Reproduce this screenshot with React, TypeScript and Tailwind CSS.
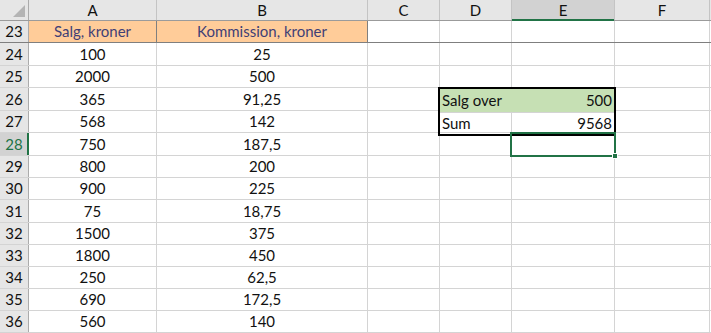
import React from 'react';

const cols = ['A', 'B', 'C', 'D', 'E', 'F'];

// widths include the 1px right gridline
const colClass: Record<string, string> = {
  A: 'w-[128px]',
  B: 'w-[211px]',
  C: 'w-[72px]',
  D: 'w-[72px]',
  E: 'w-[103px]',
  F: 'w-[95px]',
};

const rows: { n: number; h: string; a?: string; b?: string }[] = [
  { n: 23, h: 'h-[22px]', a: 'Salg, kroner', b: 'Kommission, kroner' },
  { n: 24, h: 'h-[23px]', a: '100', b: '25' },
  { n: 25, h: 'h-[22px]', a: '2000', b: '500' },
  { n: 26, h: 'h-[23px]', a: '365', b: '91,25' },
  { n: 27, h: 'h-[22px]', a: '568', b: '142' },
  { n: 28, h: 'h-[23px]', a: '750', b: '187,5' },
  { n: 29, h: 'h-[22px]', a: '800', b: '200' },
  { n: 30, h: 'h-[22px]', a: '900', b: '225' },
  { n: 31, h: 'h-[23px]', a: '75', b: '18,75' },
  { n: 32, h: 'h-[22px]', a: '1500', b: '375' },
  { n: 33, h: 'h-[22px]', a: '1800', b: '450' },
  { n: 34, h: 'h-[22px]', a: '250', b: '62,5' },
  { n: 35, h: 'h-[22px]', a: '690', b: '172,5' },
  { n: 36, h: 'h-[22px]', a: '560', b: '140' },
];

export default function App() {
  return (
    <div
      className="relative h-[333px] w-[711px] overflow-hidden bg-white text-[15px] text-[#111]"
      style={{ fontFamily: 'Lato, "Open Sans", sans-serif' }}
    >
      {/* ── Column headers ── */}
      <div className="flex h-[21px] border-b border-[#9b9b9b] bg-[#e6e6e6]">
        <div className="relative w-[29px] shrink-0 border-r border-[#ababab]">
          <svg className="absolute right-[3px] bottom-[3px]" width="12" height="12" viewBox="0 0 12 12">
            <polygon points="12,0 12,12 0,12" fill="#b4b4b4" />
          </svg>
        </div>
        {cols.map((c) => (
          <div
            key={c}
            className={`${colClass[c]} flex shrink-0 items-center justify-center border-r border-[#c4c4c4] leading-none ${
              c === 'E' ? 'relative bg-[#d2d2d2]' : ''
            }`}
          >
            {c}
            {c === 'E' && (
              <div className="absolute right-0 -bottom-px left-0 h-[2px] bg-[#217346]" />
            )}
          </div>
        ))}
        <div className="flex-1" />
      </div>

      {/* ── Rows ── */}
      {rows.map((r) => {
        const sel = r.n === 28;
        const head = r.n === 23;
        return (
          <div key={r.n} className={`flex ${r.h} border-b ${head ? 'border-[#7f7f7f]' : 'border-[#d4d4d4]'}`}>
            <div
              className={`relative flex w-[29px] shrink-0 items-center justify-center border-r border-[#ababab] leading-none ${
                sel ? 'bg-[#d2d2d2] text-[#217346]' : 'bg-[#e6e6e6]'
              }`}
            >
              {r.n}
              {sel && <div className="absolute top-0 -right-px bottom-0 w-[2px] bg-[#217346]" />}
            </div>
            <div
              className={`${colClass.A} flex shrink-0 items-center justify-center border-r leading-none ${
                head ? 'border-[#7f7f7f] bg-[#ffcc99] text-[#3f3f76]' : 'border-[#d4d4d4]'
              }`}
            >
              {r.a}
            </div>
            <div
              className={`${colClass.B} flex shrink-0 items-center justify-center border-r leading-none ${
                head ? 'border-[#7f7f7f] bg-[#ffcc99] text-[#3f3f76]' : 'border-[#d4d4d4]'
              }`}
            >
              {r.b}
            </div>
            <div className={`${colClass.C} shrink-0 border-r border-[#d4d4d4]`} />
            <div className={`${colClass.D} shrink-0 border-r border-[#d4d4d4]`} />
            <div className={`${colClass.E} shrink-0 border-r border-[#d4d4d4]`} />
            <div className={`${colClass.F} shrink-0 border-r border-[#d4d4d4]`} />
            <div className="flex-1" />
          </div>
        );
      })}

      {/* ── Summary box D26:E27 (drawn over the grid) ── */}
      <div className="absolute top-[87px] left-[438px] flex w-[178px] flex-col border-2 border-black">
        <div className="flex h-[23px] items-center justify-between bg-[#c6e0b4] px-[2px] leading-none">
          <span>Salg over</span>
          <span>500</span>
        </div>
        <div className="flex h-[22px] items-center justify-between border-t border-[#d4d4d4] px-[2px] leading-none">
          <span>Sum</span>
          <span>9568</span>
        </div>
      </div>

      {/* ── Active cell E28 ── */}
      <div className="absolute top-[132px] left-[510px] h-[25px] w-[106px] border-2 border-[#217346]">
        <div className="absolute -right-[4px] -bottom-[4px] h-[6px] w-[6px] border border-white bg-[#217346]" />
      </div>
    </div>
  );
}
